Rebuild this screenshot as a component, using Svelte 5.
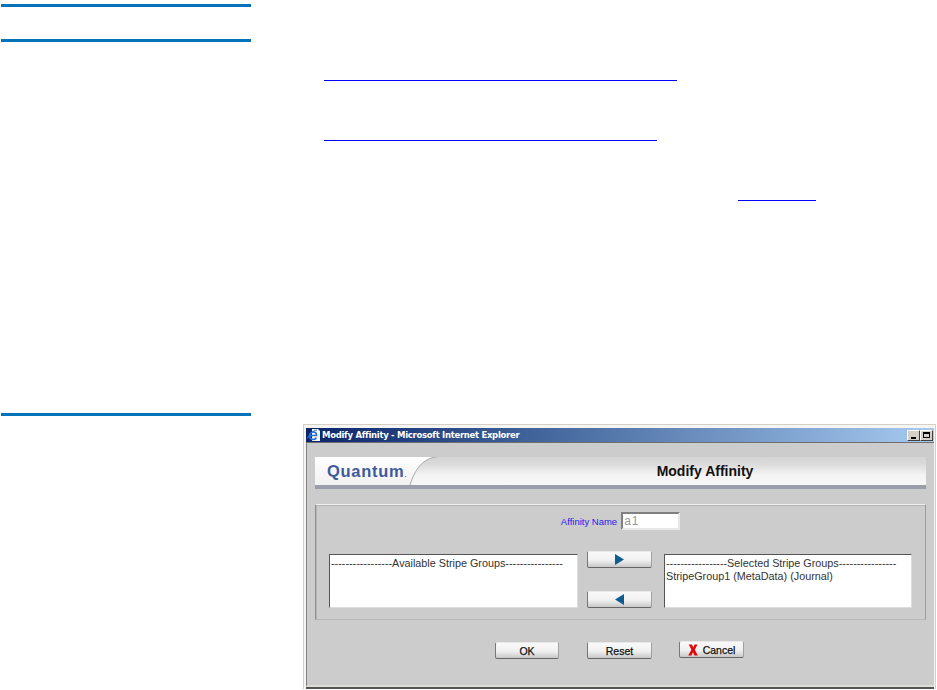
<script>
  const lead = "-----------------";
  const trail = "----------------";
</script>

<main class="page">
  <div class="rule"></div>
  <div class="rule second"></div>

  <a class="link first" href="#top" aria-label="link"></a>
  <a class="link middle" href="#top" aria-label="link"></a>
  <a class="link last" href="#top" aria-label="link"></a>

  <div class="rule third"></div>

  <section class="window">
    <header class="titlebar">
      <svg class="ie" viewBox="0 0 14 14" width="14" height="14" aria-hidden="true">
        <path d="M5 1h6l2 2v10H5z" fill="#f6f6f6" />
        <path d="M3.200 7.500h6.300C9.500 5.500 8.300 4 6.300 4 4.300 4 2.800 5.600 2.800 7.700s1.500 3.700 3.600 3.700c1.400 0 2.500-0.700 3-1.800" fill="none" stroke="#2a6fd6" stroke-width="1.700" />
        <path d="M0.500 10.500C2 6 6 2.500 10 2" fill="none" stroke="#2a6fd6" stroke-width="1" />
      </svg>
      <span class="title">Modify Affinity - Microsoft Internet Explorer</span>
      <div class="controls">
        <span class="ctl"><i class="min"></i></span>
        <span class="ctl"><i class="max"></i></span>
      </div>
    </header>

    <div class="body">
      <div class="banner">
        <svg class="swoosh" viewBox="0 0 125 28" width="125" height="28" preserveAspectRatio="none" aria-hidden="true">
          <defs>
            <linearGradient id="white" x1="0" y1="0" x2="0" y2="1">
              <stop offset="0" stop-color="#ffffff" />
              <stop offset="1" stop-color="#f1f1f1" />
            </linearGradient>
          </defs>
          <path d="M0 0H122C108 1 100 12 95 28H0Z" fill="url(#white)" />
          <path d="M122 0C108 1 100 12 95 28" fill="none" stroke="#a8a8a8" stroke-width="1" />
        </svg>
        <span class="logo">Quantum<small>.</small></span>
        <h1>Modify Affinity</h1>
      </div>

      <div class="panel">
        <div class="name-row">
          <label for="affinity">Affinity Name</label>
          <input id="affinity" value="a1" disabled />
        </div>
        <div class="pick-row">
          <div class="list">
            <div>{lead}Available Stripe Groups{trail}</div>
          </div>
          <div class="moves">
            <button class="btn" aria-label="Add"><svg viewBox="0 0 9 11" width="9" height="11"><path d="M0 0l9 5.500-9 5.500z" fill="#0f5c92" /></svg></button>
            <button class="btn" aria-label="Remove"><svg viewBox="0 0 9 11" width="9" height="11"><path d="M9 0L0 5.500 9 11z" fill="#0f5c92" /></svg></button>
          </div>
          <div class="list narrow">
            <div>{lead}Selected Stripe Groups{trail}</div>
            <div>StripeGroup1 (MetaData) (Journal)</div>
          </div>
        </div>
      </div>

      <div class="actions">
        <button class="btn act">OK</button>
        <button class="btn act reset">Reset</button>
        <button class="btn act cancel">
          <svg viewBox="0 0 10 12" width="10" height="12" aria-hidden="true"><path d="M0.800 0.500H4L5.200 3.500 6.500 0.500H9.500L6.800 5.800 9.800 11.500H6.500L5 8.200 3.300 11.500H0.200L3.400 5.800z" fill="#e00808" /></svg>
          Cancel
        </button>
      </div>
    </div>
  </section>
</main>

<style>
  :global(body) {
    background: #fff;
    font-family: "Liberation Sans", Arial, sans-serif;
  }
  .page {
    display: flex;
    flex-direction: column;
    padding-top: 4px;
    height: 686px;
    overflow: hidden;
  }
  .rule {
    width: 250px;
    height: 3px;
    margin-left: 1px;
    background: #0573b9;
    flex: none;
  }
  .rule.second {
    margin-top: 32px;
  }
  .rule.third {
    margin-top: 212px;
  }
  .link {
    display: block;
    flex: none;
    height: 1px;
    margin-left: 324px;
    background: #0000ff;
  }
  .link.first {
    width: 353px;
    margin-top: 38px;
  }
  .link.middle {
    width: 333px;
    margin-top: 59px;
  }
  .link.last {
    width: 78px;
    margin-top: 59px;
    margin-left: 738px;
  }

  .window {
    flex: none;
    box-sizing: border-box;
    display: flex;
    flex-direction: column;
    width: 633px;
    height: 265px;
    margin: 8px 0 0 303px;
    padding: 3px 1px 0 2px;
    border: 1px solid #d4d0c8;
    border-bottom: 0;
    background: #f6f5f2;
  }
  .titlebar {
    flex: none;
    display: flex;
    align-items: center;
    height: 14px;
    padding-left: 1px;
    background: linear-gradient(90deg, #0a246a 0%, #3f6299 35%, #a6caf0 100%);
    border-bottom: 1px solid #6f6f6f;
  }
  .ie {
    flex: none;
    margin-right: 1px;
  }
  .title {
    color: #fff;
    font: bold 8.500px "DejaVu Sans", sans-serif;
    letter-spacing: -0.300px;
    white-space: nowrap;
  }
  .controls {
    display: flex;
    margin-left: auto;
    margin-right: 1px;
  }
  .ctl {
    position: relative;
    box-sizing: border-box;
    width: 13px;
    height: 11px;
    background: #d4d0c8;
    border: 1px solid;
    border-color: #fff #404040 #404040 #fff;
  }
  .min {
    position: absolute;
    left: 3px;
    bottom: 1px;
    width: 5px;
    height: 2px;
    background: #000;
  }
  .max {
    position: absolute;
    left: 2px;
    top: 1px;
    width: 7px;
    height: 6px;
    box-sizing: border-box;
    border: 1px solid #000;
    border-top-width: 2px;
  }

  .body {
    flex: 1;
    display: flex;
    flex-direction: column;
    background: #cccccc;
    border-left: 1px solid #808080;
    border-bottom: 2px solid #dedcd6;
    box-shadow: 0 2px 0 #555;
    margin-bottom: 2px;
    padding: 14px 8px 0 8px;
    min-height: 0;
  }
  .banner {
    position: relative;
    flex: none;
    display: flex;
    align-items: center;
    justify-content: center;
    box-sizing: border-box;
    height: 32px;
    background: linear-gradient(180deg, #d4d4d4 0%, #dadada 25%, #f4f4f4 65%, #f6f6f6 100%);
    border-bottom: 4px solid #9a9eaa;
    padding-left: 169px;
  }
  .swoosh {
    position: absolute;
    left: 0;
    top: 0;
  }
  .logo {
    position: absolute;
    left: 12px;
    top: 5px;
    color: #3f5a9a;
    font: bold 16.500px "Liberation Sans", sans-serif;
    letter-spacing: 0.700px;
  }
  .logo small {
    font-size: 9px;
    font-weight: normal;
  }
  h1 {
    margin: 0;
    color: #111;
    font: bold 14px "Liberation Sans", sans-serif;
  }

  .panel {
    flex: none;
    box-sizing: border-box;
    height: 116px;
    margin: 15px 0 0;
    width: 611px;
    border: 1px solid;
    border-color: #f0f0f0 #9c9c9c #b8b8b8 #8f8f8f;
    box-shadow: inset 1px 1px 0 #b4b4b4;
    display: flex;
    flex-direction: column;
    padding: 7px 13px 0 13px;
  }
  .name-row {
    display: flex;
    align-items: center;
    justify-content: center;
    gap: 4px;
    height: 18px;
  }
  label {
    color: #2222ee;
    font-size: 9.500px;
  }
  input {
    box-sizing: border-box;
    width: 59px;
    height: 18px;
    padding: 0 0 0 1px;
    border: 2px solid;
    border-color: #808080 #e8e8e8 #e8e8e8 #808080;
    background: #fff;
    color: #999;
    font: 12px "Liberation Sans", sans-serif;
    letter-spacing: 1px;
    opacity: 1;
  }
  .pick-row {
    display: flex;
    margin-top: 24px;
  }
  .list {
    box-sizing: border-box;
    width: 249px;
    height: 54px;
    padding: 2px 1px;
    background: #fff;
    border: 1px solid;
    border-color: #555 #ddd #ddd #555;
    color: #333;
    font-size: 10.800px;
    line-height: 13px;
    white-space: nowrap;
    overflow: hidden;
  }
  .list.narrow {
    width: 248px;
    margin-left: auto;
  }
  .moves {
    display: flex;
    flex-direction: column;
    gap: 23px;
    margin: -3px 0 0 9px;
  }
  .btn {
    box-sizing: border-box;
    display: flex;
    align-items: center;
    justify-content: center;
    gap: 5px;
    width: 65px;
    height: 17px;
    padding: 0;
    background: linear-gradient(180deg, #fafafa 0%, #f0f0f0 55%, #c8c8c8 100%);
    border: 1px solid;
    border-color: #e8e8e8 #a0a0a0 #666 #777;
    border-radius: 2px;
    color: #111;
    font: 10.500px "Liberation Sans", sans-serif;
    -webkit-text-stroke: 0.250px #111;
  }
  .actions {
    display: flex;
    gap: 28px;
    margin: 22px 0 0 180px;
  }
  .act {
    width: 64px;
  }
  .act.reset {
    width: 65px;
  }
  .cancel {
    width: 65px;
    margin: -1px 0 0 -1px;
  }
</style>
